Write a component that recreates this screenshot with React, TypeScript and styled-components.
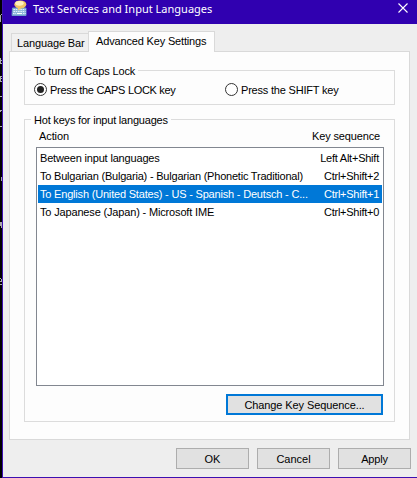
import React from 'react';
import styled, { createGlobalStyle } from 'styled-components';

const Global = createGlobalStyle`
  *{box-sizing:border-box}
  body{margin:0;background:#000;overflow:hidden}
`;

const Screen = styled.div`
  display:flex;width:417px;height:478px;background:#000;
  font:11px/14px "Liberation Sans",Arial,sans-serif;color:#000;
`;
const Backdrop = styled.svg`display:block;flex:none;width:2px;height:478px;`;
const Dialog = styled.div`
  flex:1;min-width:0;display:flex;flex-direction:column;
  border:solid #3c10b0;border-width:0 0 1px 1px;background:#eee;
`;
const TitleBar = styled.header`
  display:flex;height:24px;background:#3000b0;color:#fff;padding:0 8px 0 8px;
  font:11px/18px "Noto Sans",sans-serif;
`;
const AppIcon = styled.svg`display:block;width:18px;height:18px;margin-right:4px;`;
const Title = styled.span`flex:1;letter-spacing:.01px;`;
const CloseIcon = styled.svg`display:block;width:12px;height:12px;margin-top:2px;`;

const Text = styled.span<{ $ls?: number }>`
  white-space:pre;letter-spacing:${p => p.$ls ?? 0}px;
`;
const Tabs = styled.div`
  display:flex;align-items:flex-end;height:28px;padding-left:8px;margin-bottom:-1px;
`;
const Tab = styled.div<{ $active?: boolean }>`
  border:1px solid #d9d9d9;border-bottom:0;white-space:nowrap;
  width:${p => (p.$active ? 127 : 78)}px;
  height:${p => (p.$active ? 21 : 18)}px;
  margin-left:${p => (p.$active ? -1 : 0)}px;
  margin-bottom:${p => (p.$active ? 0 : 1)}px;
  padding:${p => (p.$active ? '2px 0 0 7px' : '2px 0 0 5px')};
  background:${p => (p.$active ? '#fdfdfd' : '#f0f0f0')};
  position:relative;
`;
const Panel = styled.main`
  width:401px;height:389px;margin-left:6px;padding:12px 14px 0;
  border:1px solid #d9d9d9;background:#fdfdfd;
`;
const Group = styled.fieldset<{ $h: number }>`
  width:371px;height:${p => p.$h}px;margin:0 0 8px;padding:0 10px 0 11px;
  border:1px solid #dcdcdc;min-width:0;
`;
const Legend = styled.legend`padding:0 3px;margin-left:-5px;height:12px;`;
const Radios = styled.div`display:flex;padding-top:7px;margin-left:-2px;`;
const RadioLabel = styled.label<{ $w: number }>`display:flex;width:${p => p.$w}px;height:14px;`;
const RadioMark = styled.svg`display:block;width:14px;height:14px;margin-right:2px;`;
const ListHeader = styled.div`
  display:flex;justify-content:space-between;height:22px;padding:4px 4px 0 3px;
`;
const List = styled.div`
  width:348px;height:239px;border:1px solid #828790;background:#fff;padding:1px 1px 0;
`;
const Row = styled.div<{ $selected?: boolean }>`
  display:flex;justify-content:space-between;height:18px;padding:2px 3px 0 2px;
  background:${p => (p.$selected ? '#0078d7' : 'transparent')};
  color:${p => (p.$selected ? '#fff' : '#000')};
`;
const Button = styled.button<{ $primary?: boolean }>`
  width:${p => (p.$primary ? 157 : 73)}px;height:21px;padding:0;
  border:${p => (p.$primary ? '2px solid #0078d7' : '1px solid #adadad')};
  background:#e1e1e1;color:#000;font:inherit;
`;
const ListActions = styled.div`display:flex;justify-content:flex-end;padding:8px 1px 0 0;`;
const Footer = styled.footer`display:flex;justify-content:flex-end;gap:8px;padding:8px 6px 0 0;`;

const hotKeys = [
  { action: 'Between input languages', ls: -0.17, keys: 'Left Alt+Shift', kls: -0.23 },
  { action: 'To Bulgarian (Bulgaria) - Bulgarian (Phonetic Traditional)', ls: -0.21, keys: 'Ctrl+Shift+2', kls: -0.26 },
  { action: 'To English (United States) - US - Spanish - Deutsch - C...', ls: -0.19, keys: 'Ctrl+Shift+1', kls: -0.26, selected: true },
  { action: 'To Japanese (Japan) - Microsoft IME', ls: -0.16, keys: 'Ctrl+Shift+0', kls: -0.26 },
];

function Radio({ checked }: { checked?: boolean }) {
  return (
    <RadioMark viewBox="0 0 14 14">
      <circle cx="6.5" cy="6.5" r="6" fill="#fff" stroke="#333" strokeWidth="1" />
      {checked && <circle cx="6.5" cy="6.5" r="3.5" fill="#222" />}
    </RadioMark>
  );
}

export default function App() {
  return (
    <Screen>
      <Global />
      <Backdrop viewBox="0 0 2 478">
        <path
          fill="#aaa"
          d="M0 15h1v7H0zM1 14h1v1H1zM0 58h1v6H0zM1 60h1v1H1zM1 63h1v1H1zM0 76h1v6H0zM1 76h1v1H1zM1 78h1v1H1zM1 81h1v1H1zM0 96h2v1H0zM0 110h2v1H0zM0 111h1v1H0zM0 126h2v1H0zM1 177h1v4H1zM0 222h1v4H0zM1 222h1v6H1zM0 278h1v1H0zM1 279h1v2H1zM0 281h2v1H0zM0 284h2v1H0z"
        />
      </Backdrop>
      <Dialog>
        <TitleBar>
          <AppIcon viewBox="0 0 18 18">
            <path d="M1.5 8h13.5v7.5H1z" fill="#8fb8dc" stroke="#6d9cc9" />
            <path d="M2.5 9.5h12M2.5 11.5h12M2 13.5h3M12 13.5h3" stroke="#e4f1fc" strokeDasharray="1.5 .8" />
            <path d="M6 13.5h5" stroke="#fff" />
            <path d="M7 7v3.5l3.5-2.5z" fill="#f3c968" />
            <ellipse cx="9.3" cy="4.4" rx="6" ry="4" fill="#f0c565" />
            <ellipse cx="8.5" cy="3.3" rx="4.2" ry="2.4" fill="#fff0bd" />
          </AppIcon>
          <Title>Text Services and Input Languages</Title>
          <CloseIcon viewBox="0 0 12 12"><path d="M1.5 1.5l9 9M10.5 1.5l-9 9" stroke="#fff" strokeWidth="1.1" /></CloseIcon>
        </TitleBar>
        <Tabs>
          <Tab><Text $ls={-0.13}>Language Bar</Text></Tab>
          <Tab $active><Text $ls={-0.16}>Advanced Key Settings</Text></Tab>
        </Tabs>
        <Panel>
          <Group $h={41}>
            <Legend><Text $ls={-0.12}>To turn off Caps Lock</Text></Legend>
            <Radios>
              <RadioLabel $w={191}><Radio checked /><Text $ls={-0.31}>Press the CAPS LOCK key</Text></RadioLabel>
              <RadioLabel $w={130}><Radio /><Text $ls={-0.2}>Press the SHIFT key</Text></RadioLabel>
            </Radios>
          </Group>
          <Group $h={309}>
            <Legend><Text $ls={-0.2}>Hot keys for input languages</Text></Legend>
            <ListHeader><Text $ls={-0.1}>Action</Text><Text $ls={-0.14}>Key sequence</Text></ListHeader>
            <List>
              {hotKeys.map(k => (
                <Row key={k.action} $selected={k.selected}>
                  <Text $ls={k.ls}>{k.action}</Text>
                  <Text $ls={k.kls}>{k.keys}</Text>
                </Row>
              ))}
            </List>
            <ListActions><Button $primary><Text $ls={-0.1}>Change Key Sequence...</Text></Button></ListActions>
          </Group>
        </Panel>
        <Footer>
          <Button>OK</Button>
          <Button>Cancel</Button>
          <Button><Text $ls={-0.2}>Apply</Text></Button>
        </Footer>
      </Dialog>
    </Screen>
  );
}
